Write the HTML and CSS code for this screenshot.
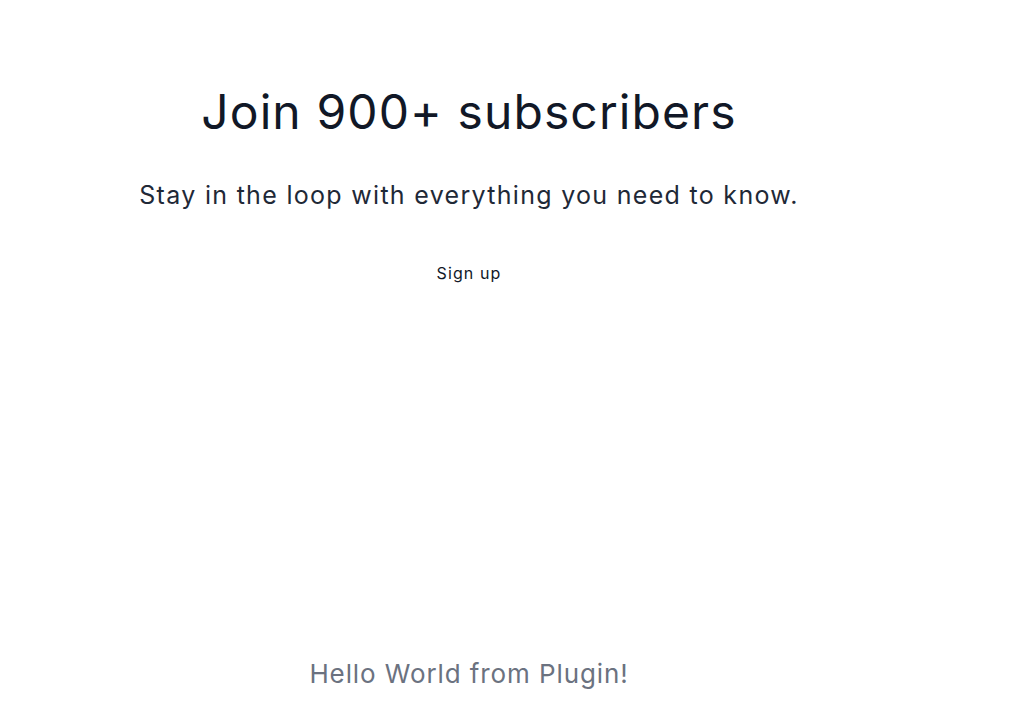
FILE: index.html
```html
<!DOCTYPE html>
<html>
<head>
<meta charset="utf-8">
<title>Subscribe</title>
<link rel="stylesheet" href="styles.css">
</head>
<body>
<div class="page">
	<section class="signup">
		<h1 class="signupTitle">Join 900+ subscribers</h1>
		<p class="signupText">Stay in the loop with everything you need to know.</p>
		<button class="signupBtn" type="button">Sign up</button>
	</section>
	<div class="plugin">Hello World from Plugin!</div>
</div>
</body>
</html>
```

FILE: styles.css
```css
body{
	margin:0;
	background:#ffffff;
	font-family:Inter, "Noto Sans CJK JP", sans-serif;
}
.page{
	width:938px;
	height:704px;
	display:flex;
	flex-direction:column;
	align-items:center;
}
.signup{
	display:flex;
	flex-direction:column;
	align-items:center;
	padding-top:84px;
}
.signupTitle{
	margin:0;
	font-size:48px;
	line-height:56px;
	font-weight:400;
	letter-spacing:1.1px;
	color:#111827;
}
.signupText{
	margin:39px 0 0 0;
	font-size:25px;
	line-height:32px;
	letter-spacing:1.3px;
	color:#1f2937;
}
.signupBtn{
	margin-top:50px;
	padding:0;
	border:none;
	background:none;
	font-family:inherit;
	font-size:16px;
	line-height:24px;
	letter-spacing:1.1px;
	color:#111827;
}
.plugin{
	margin-top:auto;
	margin-bottom:14px;
	font-size:26px;
	line-height:32px;
	letter-spacing:0.9px;
	color:#6b7280;
}
```
